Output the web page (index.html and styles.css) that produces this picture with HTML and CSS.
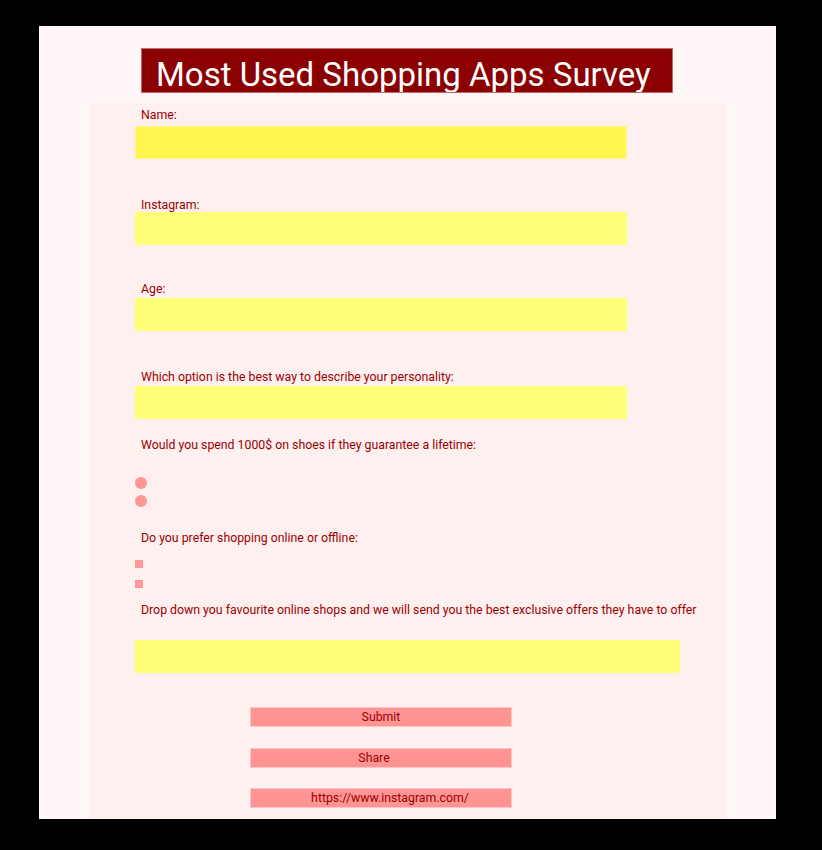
FILE: index.html
```html
<!DOCTYPE html>
<html>
<head>
    <meta charset="UTF-8">
    <title>Most Used Shopping Apps Survey</title>
    <link rel="stylesheet" href="styles.css">
</head>
<body>
<div class="page">
    <h1 class="title">Most Used Shopping Apps Survey</h1>
    <form class="survey">
        <div class="field field-first">
            <label class="field-label" for="name">Name:</label>
            <input class="text-input text-input-focus" id="name" type="text">
        </div>
        <div class="field field-gap field-tight">
            <label class="field-label" for="insta">Instagram:</label>
            <input class="text-input" id="insta" type="text">
        </div>
        <div class="field field-gap-small">
            <label class="field-label" for="age">Age:</label>
            <input class="text-input" id="age" type="text">
        </div>
        <div class="field field-gap-big">
            <label class="field-label" for="person">Which option is the best way to describe your personality:</label>
            <input class="text-input" id="person" type="text">
        </div>
        <div class="field field-question">
            <p class="field-label">Would you spend 1000$ on shoes if they guarantee a lifetime:</p>
            <div class="choices choices-radio">
                <input class="radio" type="radio" name="shoes">
                <input class="radio" type="radio" name="shoes">
            </div>
        </div>
        <div class="field field-question2">
            <p class="field-label">Do you prefer shopping online or offline:</p>
            <div class="choices choices-check">
                <input class="check" type="checkbox">
                <input class="check" type="checkbox">
            </div>
        </div>
        <div class="field field-question3">
            <label class="field-label" for="shops">Drop down you favourite online shops and we will send you the best exclusive offers they have to offer</label>
            <input class="text-input text-input-wide" id="shops" type="text">
        </div>
        <div class="actions">
            <button class="btn" type="button">Submit</button>
            <button class="btn btn-share" type="button">Share</button>
            <a class="btn btn-link" href="#">https://www.instagram.com/</a>
        </div>
    </form>
</div>
</body>
</html>
```

FILE: styles.css
```css
html,body{margin:0;padding:0;background:#000000;}
body{padding:26px 46px 0 39px;height:824px;overflow:hidden;font-family:Roboto,"Liberation Sans",sans-serif;}

.page{width:737px;height:793px;background:#fff7f7;overflow:hidden;padding-top:22px;box-sizing:border-box;}

.title{margin:0 0 10px 102px;width:532px;height:45px;box-sizing:border-box;background:#8b0000;
    border:1px solid #c36868;color:#ffffff;font-weight:400;font-size:33px;line-height:30px;
    padding:11px 0 0 14px;overflow:hidden;white-space:nowrap;}

.survey{margin:0 0 0 50px;width:638px;height:800px;background:#fff0f0;padding:5px 0 0 46px;box-sizing:border-box;}

.field-label{display:block;margin:0 0 1px 0;padding-left:6px;font-size:12.3px;line-height:15px;color:#9a0000;white-space:nowrap;}
.field-first .field-label{margin-bottom:3px;}
.field-tight .field-label{margin-bottom:-1px;}

.field-gap{margin-top:39px;}
.field-gap-small{margin-top:37px;}
.field-gap-big{margin-top:39px;}
.field-question{margin-top:19px;}
.field-question2{margin-top:24px;}
.field-question3{margin-top:15px;}

.text-input{display:block;width:492px;height:33px;margin:0;border:0;padding:0;background:#ffff77;outline:none;}
.text-input-focus{background:#fff64f;box-shadow:inset 0 0 0 1px #fff88a;}
.text-input-wide{width:545px;margin-top:22px;}

.choices{display:flex;flex-direction:column;align-items:flex-start;}
.choices-radio{margin-top:24px;gap:6px;}
.choices-check{margin-top:14px;gap:12px;}

.radio{appearance:none;-webkit-appearance:none;margin:0;width:12px;height:12px;border-radius:50%;background:#ff9696;}
.check{appearance:none;-webkit-appearance:none;margin:0;width:8px;height:8px;background:#ff9696;}

.actions{display:flex;flex-direction:column;gap:21px;margin:34px 0 0 115px;}
.btn{display:block;width:262px;height:20px;box-sizing:border-box;margin:0;padding:0;border:1px solid #ffc4c4;
    background:#ff9494;color:#9a0000;font-family:Roboto,"Liberation Sans",sans-serif;font-size:12.3px;
    line-height:18px;text-align:center;text-decoration:none;}
.btn-share{padding-right:14px;}
.btn-link{padding-left:18px;margin-top:-1px;}
```
